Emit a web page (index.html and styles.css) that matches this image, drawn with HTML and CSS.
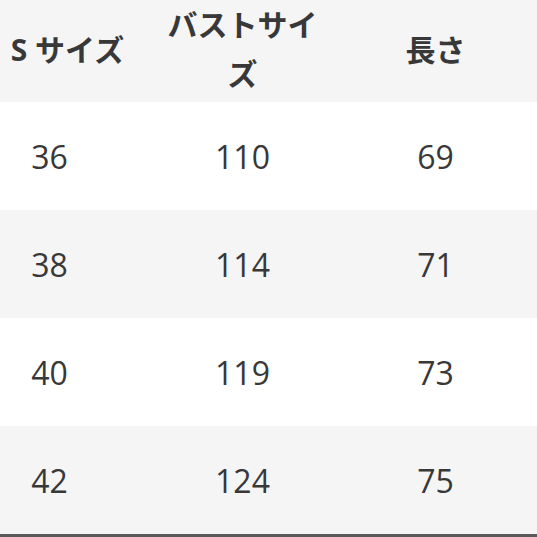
FILE: index.html
```html
<!DOCTYPE html>
<html lang="ja">
<head>
<meta charset="utf-8">
<link rel="stylesheet" href="styles.css">
</head>
<body>
<div class="frame">
  <table class="size-table">
    <colgroup>
      <col class="c1">
      <col class="c2">
      <col class="c3">
    </colgroup>
    <thead>
      <tr>
        <th class="first">S サイズ</th>
        <th>バストサイズ</th>
        <th class="last">長さ</th>
      </tr>
    </thead>
    <tbody>
      <tr><td>36</td><td>110</td><td class="last">69</td></tr>
      <tr class="alt"><td>38</td><td>114</td><td class="last">71</td></tr>
      <tr><td>40</td><td>119</td><td class="last">73</td></tr>
      <tr class="alt"><td>42</td><td>124</td><td class="last">75</td></tr>
    </tbody>
  </table>
</div>
</body>
</html>
```

FILE: styles.css
```css
html, body {
  margin: 0;
  padding: 0;
  background: #ffffff;
}

.frame {
  width: 537px;
  height: 537px;
  overflow: hidden;
}

.size-table {
  margin-left: -47px;
  width: 590px;
  border-collapse: collapse;
  table-layout: fixed;
  font-family: "Open Sans", "Noto Sans CJK JP", sans-serif;
  color: #383838;
  border-bottom: 3px solid #5a5a5a;
}

.size-table col.c1,
.size-table col.c2 {
  width: 193px;
}

.size-table col.c3 {
  width: 204px;
}

.size-table th {
  height: 98px;
  padding: 0 12px 4px;
  background: #f5f5f5;
  font-size: 30px;
  font-weight: 700;
  line-height: 49px;
  text-align: center;
  vertical-align: middle;
}

.size-table th.first {
  padding-left: 36px;
  padding-right: 0;
  white-space: nowrap;
}

.size-table td {
  height: 108px;
  padding: 0;
  font-size: 32px;
  font-weight: 400;
  text-align: center;
  vertical-align: middle;
  background: #ffffff;
}

.size-table th.last {
  padding-right: 23px;
}

.size-table td.last {
  padding-right: 11px;
}

.size-table tr.alt td {
  background: #f5f5f5;
}
```
